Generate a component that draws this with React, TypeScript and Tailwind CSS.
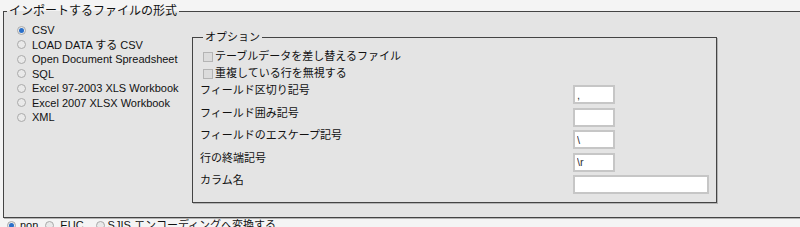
import React from 'react';

const formats = [
  'CSV',
  'LOAD DATA する CSV',
  'Open Document Spreadsheet',
  'SQL',
  'Excel 97-2003 XLS Workbook',
  'Excel 2007 XLSX Workbook',
  'XML',
];

const fields = [
  { label: 'フィールド区切り記号', value: ',', wide: false },
  { label: 'フィールド囲み記号', value: '', wide: false },
  { label: 'フィールドのエスケープ記号', value: '\\', wide: false },
  { label: '行の終端記号', value: '\\r', wide: false },
  { label: 'カラム名', value: '', wide: true },
];

function Radio({ checked }: { checked?: boolean }) {
  return (
    <span className="inline-flex items-center justify-center w-[9px] h-[9px] rounded-full border border-[#a9a9a9] bg-[#e9e9e9] shrink-0">
      {checked && <span className="w-[5px] h-[5px] rounded-full bg-[#2a6fc9]" />}
    </span>
  );
}

function Check() {
  return <span className="inline-block w-[10px] h-[10px] border border-[#b4b4b4] bg-[#dcdcdc] shrink-0" />;
}

export default function App() {
  return (
    <div className="w-[800px] h-[227px] overflow-hidden bg-[#f4f4f4] text-[#111] font-['Liberation_Sans','Noto_Sans_CJK_JP',sans-serif]">
      <fieldset className="ml-[3px] mt-[4px] w-[820px] border border-[#444] bg-[#e4e4e4] shadow-[1px_1px_0_#b4b4b4] pb-[14px]">
        <legend className="ml-[3px] px-[2px] text-[12px] leading-[14px]">インポートするファイルの形式</legend>
        <div className="flex items-start">
          <div className="w-[188px] pl-[13px] pt-[5px] flex flex-col">
            {formats.map((f, i) => (
              <label key={f} className="flex items-center gap-[6px] h-[14.5px] text-[11px] leading-[14px]">
                <Radio checked={i === 0} />
                <span>{f}</span>
              </label>
            ))}
          </div>
          <fieldset className="mt-[13px] w-[525px] border border-[#444] shadow-[1px_1px_0_#b4b4b4] pl-[7px] pb-[8px] text-[11px] leading-[13px]">
            <legend className="ml-[3px] px-[2px]">オプション</legend>
            <div className="pt-[6px] flex flex-col gap-[4px] pl-[3px]">
              <label className="flex items-center gap-[2px]"><Check />テーブルデータを差し替えるファイル</label>
              <label className="flex items-center gap-[2px]"><Check />重複している行を無視する</label>
            </div>
            <div className="flex flex-col gap-[3.5px] mt-[5px]">
              {fields.map((f) => (
                <div key={f.label} className="flex items-start">
                  <span className="w-[373px] -mt-[1px]">{f.label}</span>
                  <input
                    readOnly
                    value={f.value}
                    className={`${f.wide ? 'w-[136px]' : 'w-[42px]'} h-[19px] bg-white border-2 border-[#c6c6c6] px-[2px] text-[11px] text-[#333] outline-none`}
                  />
                </div>
              ))}
            </div>
          </fieldset>
        </div>
      </fieldset>
      <div className="flex items-center pl-[7px] mt-[1px] text-[11px] leading-[13px]">
        <Radio checked />
        <span className="ml-[4px] mr-[7px]">non</span>
        <Radio />
        <span className="ml-[6px] mr-[12px]">EUC</span>
        <Radio />
        <span className="ml-[3px]">SJIS エンコーディングへ変換する</span>
      </div>
    </div>
  );
}
